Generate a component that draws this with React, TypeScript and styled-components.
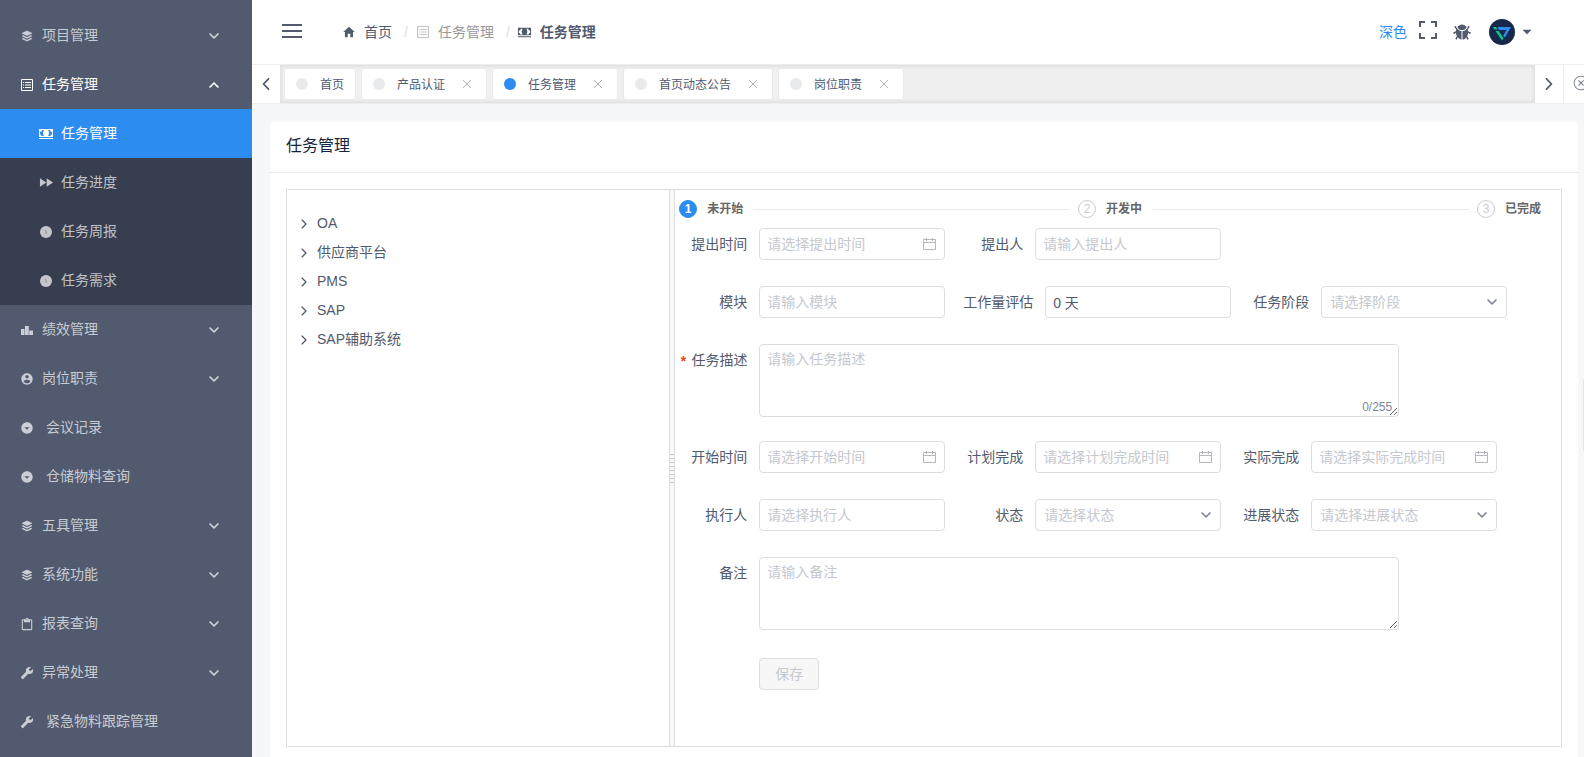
import React, { useState } from "react";
import styled, { createGlobalStyle, css } from "styled-components";
import {
  IoIosArrowBack,
  IoIosArrowDown,
  IoIosArrowForward,
  IoIosArrowUp,
  IoIosBug,
  IoIosCloseCircleOutline,
  IoLogoBuffer,
  IoMdArrowDropdown,
  IoMdArrowDropdownCircle,
  IoMdBuild,
  IoMdCash,
  IoMdClipboard,
  IoMdContact,
  IoMdFastforward,
  IoMdHome,
} from "react-icons/io";

const colors = {
  primary: "#2d8cf0",
  title: "#17233d",
  text: "#515a6e",
  sub: "#808695",
  disabled: "#c5c8ce",
  border: "#dcdee2",
  divider: "#e8eaec",
  page: "#f5f7f9",
  menu: "#515a6e",
  submenu: "#363e4f",
};

const GlobalStyle = createGlobalStyle`
  *, *::before, *::after { box-sizing: border-box; }
  body {
    margin: 0;
    overflow: hidden;
    background: ${colors.page};
    color: ${colors.text};
    font: 14px/21px "Liberation Sans", "Noto Sans CJK SC", sans-serif;
  }
  button, input, select, textarea { font: inherit; color: inherit; }
  button { border: 0; padding: 0; background: none; cursor: pointer; }
  a { color: inherit; text-decoration: none; }
  svg { display: block; flex: none; }
`;

const Layout = styled.div`
  display: flex;
  height: 100vh;
`;

/* ---------- sidebar ---------- */

const Sidebar = styled.nav`
  flex: none;
  width: 252px;
  padding-top: 11px;
  overflow: hidden;
  background: ${colors.menu};
`;

const menuRow = css`
  display: flex;
  align-items: center;
  width: 100%;
  height: 49px;
  color: rgba(255, 255, 255, 0.7);
`;

const MenuButton = styled.button<{ $open?: boolean }>`
  ${menuRow}
  gap: 8px;
  padding: 0 31px 0 20px;
  text-align: left;
  ${(p) => p.$open && "color: #fff;"}
`;

const MenuLink = styled.a`
  ${menuRow}
  gap: 12px;
  padding: 0 20px;
`;

const MenuLabel = styled.span`
  flex: 1;
`;

const IconSlot = styled.span<{ $faint?: boolean }>`
  display: flex;
  flex: none;
  justify-content: center;
  width: 14px;
  opacity: ${(p) => (p.$faint ? 0.6 : 1)};
`;

const SubMenu = styled.div`
  background: ${colors.submenu};
`;

const SubLink = styled.a<{ $active?: boolean }>`
  ${menuRow}
  gap: 8px;
  padding-left: 39px;
  ${(p) => p.$active && `background: ${colors.primary}; color: #fff;`}
`;

const WrenchIcon = styled(IoMdBuild)`
  transform: scaleX(-1);
`;

const boldStroke = css`
  stroke: currentColor;
  stroke-width: 12px;
`;

const ChevronDown = styled(IoIosArrowDown)`
  ${boldStroke}
`;

const ChevronUp = styled(IoIosArrowUp)`
  ${boldStroke}
`;

/* ---------- header ---------- */

const Main = styled.div`
  display: flex;
  flex: 1;
  flex-direction: column;
  min-width: 0;
`;

const Header = styled.header`
  display: flex;
  flex: none;
  align-items: center;
  height: 65px;
  padding: 0 48px 0 30px;
  border-bottom: 1px solid #eee;
  background: #fff;
`;

const MenuToggle = styled.button`
  margin-right: 40px;
  padding-bottom: 3px;
`;

const Breadcrumb = styled.ol`
  display: flex;
  flex: 1;
  align-items: center;
  margin: 0;
  padding: 0;
  list-style: none;
`;

const Crumb = styled.li<{ $tone?: "muted" | "current" }>`
  display: flex;
  align-items: center;
  gap: 8px;
  color: ${(p) => (p.$tone === "muted" ? "#999" : colors.text)};
  font-weight: ${(p) => (p.$tone === "current" ? 700 : 400)};

  &:not(:first-child)::before {
    content: "/";
    margin-left: 12px;
    color: ${colors.border};
    font-weight: 400;
  }
`;

const HeaderTools = styled.div`
  display: flex;
  align-items: center;
`;

const ThemeLink = styled.a`
  margin-right: 12px;
  color: ${colors.primary};
`;

const FullscreenButton = styled.button`
  margin-right: 15px;
  padding-bottom: 4px;
`;

const BugButton = styled.button`
  margin-right: 17px;
`;

const UserButton = styled.button`
  display: flex;
  align-items: center;
  gap: 3px;
`;

/* ---------- tag bar ---------- */

const TagBar = styled.div`
  display: flex;
  flex: none;
  height: 39px;
  overflow: hidden;
  border-bottom: 1px solid #eee;
  background: #fff;
`;

const ScrollButton = styled.button`
  display: flex;
  flex: none;
  align-items: center;
  justify-content: center;
  width: 28px;
`;

const CloseAllButton = styled.button`
  flex: none;
  width: 21px;
  padding: 0 0 2px 8px;
  overflow: hidden;
  border-left: 1px solid #eee;
  color: ${colors.sub};
`;

const TagTrack = styled.div`
  display: flex;
  flex: 1;
  align-items: center;
  gap: 5px;
  min-width: 0;
  padding: 0 4px;
  background: #f0f0f0;
  box-shadow: inset 0 0 3px 2px rgba(100, 100, 100, 0.1);
`;

const Tag = styled.div`
  display: flex;
  flex: none;
  align-items: center;
  height: 32px;
  padding: 0 11px;
  border: 1px solid ${colors.divider};
  border-radius: 3px;
  background: #fff;
  font-size: 12px;
  line-height: 18px;
`;

const TagDot = styled.span<{ $active?: boolean }>`
  width: 12px;
  height: 12px;
  margin-right: 12px;
  border-radius: 50%;
  background: ${(p) => (p.$active ? colors.primary : colors.divider)};
`;

const TagText = styled.span`
  padding-top: 2px;
`;

const TagClose = styled.button`
  margin: 0 4px 0 18px;
  color: #b3b3b3;
`;

/* ---------- card ---------- */

const Content = styled.main`
  display: flex;
  flex: 1;
  min-height: 0;
  padding: 18px 6px 0 18px;
`;

const Card = styled.section`
  display: flex;
  flex: 1;
  flex-direction: column;
  min-width: 0;
  border-radius: 4px 4px 0 0;
  background: #fff;
`;

const CardTitle = styled.h1`
  margin: 0;
  padding: 12px 16px 15px;
  border-bottom: 1px solid ${colors.divider};
  color: ${colors.title};
  font-size: 16px;
  font-weight: 400;
  line-height: 23px;
`;

const Split = styled.div`
  display: flex;
  flex: 1;
  margin: 16px 16px 10px;
  border: 1px solid ${colors.border};
`;

const TreePane = styled.div`
  flex: 0 0 30%;
  min-width: 0;
`;

const Gutter = styled.div`
  display: flex;
  flex: none;
  align-items: center;
  width: 6px;
  border: solid ${colors.border};
  border-width: 0 1px;
  background: #f8f8f9;
`;

const Grip = styled.span`
  width: 4px;
  height: 29px;
  background: repeating-linear-gradient(#c5c8ce 0 1px, transparent 1px 4px);
`;

const FormPane = styled.div`
  flex: 1;
  min-width: 0;
  padding: 10px 10px 0 4px;
`;

const Tree = styled.ul`
  margin: 0;
  padding: 19px 0 0 10px;
  list-style: none;
`;

const TreeNode = styled.li`
  display: flex;
  align-items: center;
  gap: 6px;
  height: 29px;
`;

/* ---------- steps ---------- */

const Steps = styled.ol`
  display: flex;
  margin: 0 0 10px;
  padding: 0;
  list-style: none;
`;

const Step = styled.li`
  display: flex;
  align-items: center;
  height: 18px;
  color: #666;
  font-size: 12px;
  font-weight: 700;

  &:not(:last-child) { flex: 1; }
  &:not(:last-child)::after {
    content: "";
    flex: 1;
    height: 1px;
    margin: 0 8px 0 10px;
    background: ${colors.divider};
  }
  &:last-child { padding-right: 10px; }
`;

const StepMark = styled.span<{ $active?: boolean }>`
  width: 18px;
  height: 18px;
  margin-right: 10px;
  border: 1px solid ${(p) => (p.$active ? colors.primary : "#ccc")};
  border-radius: 50%;
  background: ${(p) => (p.$active ? colors.primary : "#fff")};
  color: ${(p) => (p.$active ? "#fff" : "#ccc")};
  font-weight: ${(p) => (p.$active ? 700 : 400)};
  line-height: 16px;
  text-align: center;
`;

/* ---------- form ---------- */

const Form = styled.form`
  display: flex;
  flex-direction: column;
  gap: 24px;
`;

const Row = styled.div`
  display: flex;
  gap: 10px;
  min-height: 34px;
`;

const Field = styled.div`
  display: flex;
  align-items: flex-start;
`;

const Label = styled.label<{ $wide?: boolean; $required?: boolean }>`
  flex: none;
  width: ${(p) => (p.$wide ? 90 : 80)}px;
  padding: 6px 12px 0 0;
  text-align: right;
  white-space: nowrap;

  ${(p) =>
    p.$required &&
    css`
      &::before {
        content: "*";
        margin-right: 4px;
        color: #ed4014;
        font-family: "Liberation Mono", monospace;
        font-weight: 700;
        line-height: 1;
        vertical-align: -2px;
      }
    `}
`;

const Control = styled.div`
  position: relative;
`;

const boxed = css`
  display: block;
  border: 1px solid ${colors.border};
  border-radius: 4px;
  outline: 0;
  background: #fff;

  &::placeholder { color: ${colors.disabled}; opacity: 1; }
  &:focus { border-color: ${colors.primary}; }
`;

const Input = styled.input`
  ${boxed}
  width: 186px;
  height: 32px;
  padding: 0 7px;
`;

const Select = styled.select`
  ${boxed}
  width: 186px;
  height: 32px;
  padding: 0 24px 0 8px;
  appearance: none;
  color: ${colors.disabled};
`;

const TextArea = styled.textarea`
  ${boxed}
  width: 640px;
  height: 73px;
  padding: 4px 7px;
  resize: vertical;
`;

const Adornment = styled.span`
  position: absolute;
  top: 9px;
  right: 8px;
  color: ${colors.sub};
  pointer-events: none;
`;

const Counter = styled.span`
  position: absolute;
  right: 7px;
  bottom: 1px;
  color: ${colors.sub};
  font-size: 12px;
  line-height: 18px;
  pointer-events: none;
`;

const SaveButton = styled.button`
  width: 60px;
  height: 32px;
  margin: 4px 0 0 80px;
  border: 1px solid ${colors.border};
  border-radius: 4px;
  background: #f7f7f7;
  color: ${colors.disabled};
  cursor: not-allowed;
`;

const DrawerHandle = styled.button`
  position: fixed;
  top: 50%;
  right: 0;
  width: 1px;
  height: 72px;
  background: #e4e6e9;
`;

/* ---------- icons ---------- */

function BarsIcon() {
  return (
    <svg width="20" height="14" viewBox="0 0 20 14" fill="currentColor" aria-hidden="true">
      <path d="M0 0h20v2H0zM0 6h20v2H0zM0 12h20v2H0z" />
    </svg>
  );
}

function ListIcon() {
  return (
    <svg width="14" height="14" viewBox="0 0 14 14" fill="none" stroke="currentColor" aria-hidden="true">
      <path d="M1.5 1.5h11v11h-11z" />
      <path d="M3 4.5h1M5 4.5h6M3 7h1M5 7h6M3 9.5h1M5 9.5h6" />
    </svg>
  );
}

function AlertDotIcon() {
  return (
    <svg width="14" height="14" viewBox="0 0 14 14" aria-hidden="true">
      <circle cx="7" cy="7" r="6" fill="currentColor" />
      <path d="M6 5l1 1v3" fill="none" stroke="#363e4f" strokeOpacity="0.4" />
    </svg>
  );
}

function PodiumIcon() {
  return (
    <svg width="14" height="14" viewBox="0 0 14 14" fill="currentColor" aria-hidden="true">
      <path d="M1 6h3.6v6H1zM5 3h3.8v9H5zM9.200 7.500H13V12H9.200z" />
    </svg>
  );
}

function CalendarIcon() {
  return (
    <svg width="14" height="14" viewBox="0 0 14 14" fill="none" stroke="#b4b7be" aria-hidden="true">
      <path d="M.5 2.500h12v10H.5zM.5 5.500h12M3.500 1v3M9.500 1v3" />
    </svg>
  );
}

function ExpandIcon() {
  return (
    <svg width="18" height="18" viewBox="0 0 18 18" fill="none" stroke="currentColor" strokeWidth="2" aria-hidden="true">
      <path d="M1 6V1h5M12 1h5v5M17 12v5h-5M6 17H1v-5" />
    </svg>
  );
}

function CrossIcon() {
  return (
    <svg width="8" height="8" viewBox="0 0 8 8" fill="none" stroke="currentColor" aria-hidden="true">
      <path d="M0 0l8 8M8 0L0 8" />
    </svg>
  );
}

function Avatar() {
  return (
    <svg width="26" height="26" viewBox="0 0 26 26" aria-hidden="true">
      <circle cx="13" cy="13" r="13" fill="#17294a" />
      <path d="M8.500 8H22l-6 10.500-2-1.500 3.500-6H10z" fill="#2d8cf0" />
      <path d="M4 8h3l1.500 2.500h-3zM6.500 12h3l5 7-1.500 2.500z" fill="#0fc78f" />
    </svg>
  );
}

/* ---------- pieces ---------- */

type MenuEntry = { label: string; icon: React.ReactNode; leaf?: boolean };

const subItems: MenuEntry[] = [
  { label: "任务管理", icon: <IoMdCash size={16} /> },
  { label: "任务进度", icon: <IoMdFastforward size={15} /> },
  { label: "任务周报", icon: <AlertDotIcon /> },
  { label: "任务需求", icon: <AlertDotIcon /> },
];

const lowerItems: MenuEntry[] = [
  { label: "绩效管理", icon: <PodiumIcon /> },
  { label: "岗位职责", icon: <IoMdContact size={14} /> },
  { label: "会议记录", icon: <IoMdArrowDropdownCircle size={14} />, leaf: true },
  { label: "仓储物料查询", icon: <IoMdArrowDropdownCircle size={14} />, leaf: true },
  { label: "五具管理", icon: <IoLogoBuffer size={14} /> },
  { label: "系统功能", icon: <IoLogoBuffer size={14} /> },
  { label: "报表查询", icon: <IoMdClipboard size={14} /> },
  { label: "异常处理", icon: <WrenchIcon size={14} /> },
  { label: "紧急物料跟踪管理", icon: <WrenchIcon size={14} />, leaf: true },
];

const tags = ["首页", "产品认证", "任务管理", "首页动态公告", "岗位职责"];
const treeNodes = ["OA", "供应商平台", "PMS", "SAP", "SAP辅助系统"];
const steps = ["未开始", "开发中", "已完成"];

function MenuItem({ label, icon, leaf }: MenuEntry) {
  if (leaf) {
    return (
      <MenuLink href="#">
        <IconSlot>{icon}</IconSlot>
        {label}
      </MenuLink>
    );
  }
  return (
    <MenuButton type="button">
      <IconSlot>{icon}</IconSlot>
      <MenuLabel>{label}</MenuLabel>
      <ChevronDown size={14} />
    </MenuButton>
  );
}

type FieldProps = { id: string; label: string; placeholder?: string; wide?: boolean };

function TextField({ id, label, placeholder, wide, value }: FieldProps & { value?: string }) {
  return (
    <Field>
      <Label htmlFor={id} $wide={wide}>{label}</Label>
      <Input id={id} placeholder={placeholder} defaultValue={value} />
    </Field>
  );
}

function DateField({ id, label, placeholder }: FieldProps) {
  return (
    <Field>
      <Label htmlFor={id}>{label}</Label>
      <Control>
        <Input id={id} placeholder={placeholder} />
        <Adornment><CalendarIcon /></Adornment>
      </Control>
    </Field>
  );
}

function SelectField({ id, label, placeholder }: FieldProps) {
  return (
    <Field>
      <Label htmlFor={id}>{label}</Label>
      <Control>
        <Select id={id} defaultValue="">
          <option value="">{placeholder}</option>
        </Select>
        <Adornment><ChevronDown size={14} /></Adornment>
      </Control>
    </Field>
  );
}

export default function App() {
  const [description, setDescription] = useState("");

  return (
    <Layout>
      <GlobalStyle />
      <Sidebar>
        <MenuItem label="项目管理" icon={<IoLogoBuffer size={14} />} />
        <MenuButton type="button" $open aria-expanded="true">
          <IconSlot><ListIcon /></IconSlot>
          <MenuLabel>任务管理</MenuLabel>
          <ChevronUp size={14} />
        </MenuButton>
        <SubMenu>
          {subItems.map(({ label, icon }, i) => (
            <SubLink key={label} href="#" $active={i === 0}>
              <IconSlot>{icon}</IconSlot>
              {label}
            </SubLink>
          ))}
        </SubMenu>
        {lowerItems.map((item) => (
          <MenuItem key={item.label} {...item} />
        ))}
      </Sidebar>

      <Main>
        <Header>
          <MenuToggle type="button" aria-label="menu"><BarsIcon /></MenuToggle>
          <Breadcrumb>
            <Crumb><IconSlot><IoMdHome size={14} /></IconSlot><a href="#">首页</a></Crumb>
            <Crumb $tone="muted"><IconSlot $faint><ListIcon /></IconSlot>任务管理</Crumb>
            <Crumb $tone="current"><IconSlot><IoMdCash size={15} /></IconSlot>任务管理</Crumb>
          </Breadcrumb>
          <HeaderTools>
            <ThemeLink href="#">深色</ThemeLink>
            <FullscreenButton type="button" aria-label="fullscreen"><ExpandIcon /></FullscreenButton>
            <BugButton type="button" aria-label="errors"><IoIosBug size={20} /></BugButton>
            <UserButton type="button" aria-label="user">
              <Avatar />
              <IoMdArrowDropdown size={18} />
            </UserButton>
          </HeaderTools>
        </Header>

        <TagBar>
          <ScrollButton type="button" aria-label="previous"><IoIosArrowBack size={18} /></ScrollButton>
          <TagTrack>
            {tags.map((tag, i) => (
              <Tag key={tag}>
                <TagDot $active={i === 2} />
                <TagText>{tag}</TagText>
                {i > 0 && (
                  <TagClose type="button" aria-label="close"><CrossIcon /></TagClose>
                )}
              </Tag>
            ))}
          </TagTrack>
          <ScrollButton type="button" aria-label="next"><IoIosArrowForward size={18} /></ScrollButton>
          <CloseAllButton type="button" aria-label="close all"><IoIosCloseCircleOutline size={18} /></CloseAllButton>
        </TagBar>

        <Content>
          <Card>
            <CardTitle>任务管理</CardTitle>
            <Split>
              <TreePane>
                <Tree>
                  {treeNodes.map((node) => (
                    <TreeNode key={node}><IoIosArrowForward size={14} />{node}</TreeNode>
                  ))}
                </Tree>
              </TreePane>
              <Gutter><Grip /></Gutter>
              <FormPane>
                <Steps>
                  {steps.map((step, i) => (
                    <Step key={step}>
                      <StepMark $active={i === 0}>{i + 1}</StepMark>
                      {step}
                    </Step>
                  ))}
                </Steps>
                <Form>
                  <Row>
                    <DateField id="proposed" label="提出时间" placeholder="请选择提出时间" />
                    <TextField id="proposer" label="提出人" placeholder="请输入提出人" />
                  </Row>
                  <Row>
                    <TextField id="module" label="模块" placeholder="请输入模块" />
                    <TextField id="workload" label="工作量评估" value="0 天" wide />
                    <SelectField id="stage" label="任务阶段" placeholder="请选择阶段" />
                  </Row>
                  <Field>
                    <Label htmlFor="description" $required>任务描述</Label>
                    <Control>
                      <TextArea
                        id="description"
                        placeholder="请输入任务描述"
                        maxLength={255}
                        value={description}
                        onChange={(e) => setDescription(e.target.value)}
                      />
                      <Counter>{`${description.length}/255`}</Counter>
                    </Control>
                  </Field>
                  <Row>
                    <DateField id="start" label="开始时间" placeholder="请选择开始时间" />
                    <DateField id="planned" label="计划完成" placeholder="请选择计划完成时间" />
                    <DateField id="actual" label="实际完成" placeholder="请选择实际完成时间" />
                  </Row>
                  <Row>
                    <TextField id="executor" label="执行人" placeholder="请选择执行人" />
                    <SelectField id="status" label="状态" placeholder="请选择状态" />
                    <SelectField id="progress" label="进展状态" placeholder="请选择进展状态" />
                  </Row>
                  <Field>
                    <Label htmlFor="remark">备注</Label>
                    <TextArea id="remark" placeholder="请输入备注" />
                  </Field>
                  <SaveButton type="button" disabled>保存</SaveButton>
                </Form>
              </FormPane>
            </Split>
          </Card>
        </Content>
      </Main>
      <DrawerHandle type="button" aria-label="settings" />
    </Layout>
  );
}
